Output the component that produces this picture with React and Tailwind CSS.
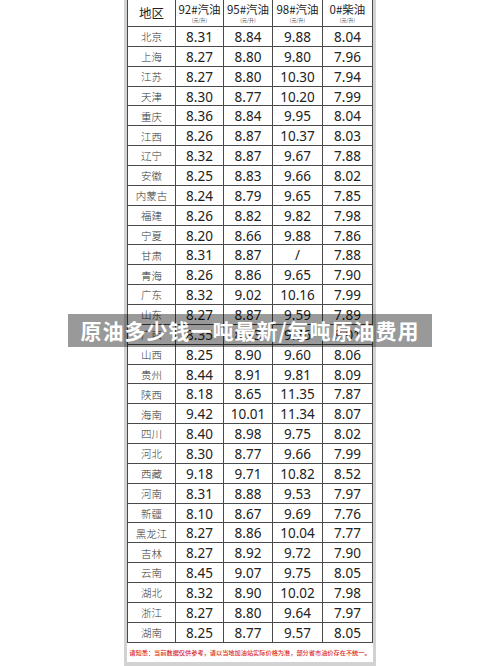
const rows = [
  ["北京", "8.31", "8.84", "9.88", "8.04"],
  ["上海", "8.27", "8.80", "9.80", "7.96"],
  ["江苏", "8.27", "8.80", "10.30", "7.94"],
  ["天津", "8.30", "8.77", "10.20", "7.99"],
  ["重庆", "8.36", "8.84", "9.95", "8.04"],
  ["江西", "8.26", "8.87", "10.37", "8.03"],
  ["辽宁", "8.32", "8.87", "9.67", "7.88"],
  ["安徽", "8.25", "8.83", "9.66", "8.02"],
  ["内蒙古", "8.24", "8.79", "9.65", "7.85"],
  ["福建", "8.26", "8.82", "9.82", "7.98"],
  ["宁夏", "8.20", "8.66", "9.88", "7.86"],
  ["甘肃", "8.31", "8.87", "/", "7.88"],
  ["青海", "8.26", "8.86", "9.65", "7.90"],
  ["广东", "8.32", "9.02", "10.16", "7.99"],
  ["山东", "8.27", "8.87", "9.59", "7.89"],
  ["广西", "8.35", "8.93", "9.76", "8.01"],
  ["山西", "8.25", "8.90", "9.60", "8.06"],
  ["贵州", "8.44", "8.91", "9.81", "8.09"],
  ["陕西", "8.18", "8.65", "11.35", "7.87"],
  ["海南", "9.42", "10.01", "11.34", "8.07"],
  ["四川", "8.40", "8.98", "9.75", "8.02"],
  ["河北", "8.30", "8.77", "9.66", "7.99"],
  ["西藏", "9.18", "9.71", "10.82", "8.52"],
  ["河南", "8.31", "8.88", "9.53", "7.97"],
  ["新疆", "8.10", "8.67", "9.69", "7.76"],
  ["黑龙江", "8.27", "8.86", "10.04", "7.77"],
  ["吉林", "8.27", "8.92", "9.72", "7.90"],
  ["云南", "8.45", "9.07", "9.75", "8.05"],
  ["湖北", "8.32", "8.90", "10.02", "7.98"],
  ["浙江", "8.27", "8.80", "9.64", "7.97"],
  ["湖南", "8.25", "8.77", "9.57", "8.05"],
];

const heads = ["92#汽油", "95#汽油", "98#汽油", "0#柴油"];

const cjk = "font-['Noto_Sans_CJK_SC',sans-serif]";
const num = "font-['Noto_Sans','Noto_Sans_CJK_SC',sans-serif]";

export default function App() {
  return (
    <div className="relative w-[500px] h-[666px] bg-white overflow-hidden">
      <div className="mx-auto w-[252px] h-[666px] border-x-[3px] border-b-[4px] border-[#d2d2d2] flex flex-col">
        <div className="border-x border-[#4a4a4a] flex flex-col">
          <div className="grid grid-cols-[48px_48px_49px_50px_1fr] h-[27px] border-b border-[#4a4a4a]">
            <div className={`flex items-center justify-center border-r border-[#4a4a4a] text-[12.5px] text-[#222] ${cjk}`}>
              地区
            </div>
            {heads.map((h, i) => (
              <div
                key={h}
                className={`flex flex-col items-center justify-center ${i < 3 ? "border-r border-[#4a4a4a]" : ""} ${cjk}`}
              >
                <span className="text-[11.5px] leading-[13px] text-[#222]">{h}</span>
                <span className="text-[5px] leading-[7px] text-[#555]">(元/升)</span>
              </div>
            ))}
          </div>
          {rows.map((r) => (
            <div
              key={r[0]}
              className="grid grid-cols-[48px_48px_49px_50px_1fr] h-[19.87px] border-b border-[#4a4a4a]"
            >
              <div className={`flex items-center justify-center border-r border-[#4a4a4a] text-[10.5px] font-light text-[#333] ${cjk}`}>
                {r[0]}
              </div>
              {r.slice(1).map((v, i) => (
                <div
                  key={i}
                  className={`flex items-center justify-center text-[13.5px] text-[#222] ${i < 3 ? "border-r border-[#4a4a4a]" : ""} ${num}`}
                >
                  {v}
                </div>
              ))}
            </div>
          ))}
        </div>
        <div className={`flex-1 flex items-center justify-center px-[2px] text-[6.2px] font-medium text-[#d9261c] whitespace-nowrap ${cjk}`}>
          请知悉：当前数据仅供参考，请以当地加油站实际价格为准，部分省市油价存在不统一。
        </div>
      </div>
      <div className="absolute left-[68px] top-[314px] w-[364px] h-[33px] bg-black/40 flex items-center justify-center">
        <span className={`text-white text-[21px] font-bold tracking-[1px] ${cjk}`}>
          原油多少钱一吨最新/每吨原油费用
        </span>
      </div>
    </div>
  );
}
